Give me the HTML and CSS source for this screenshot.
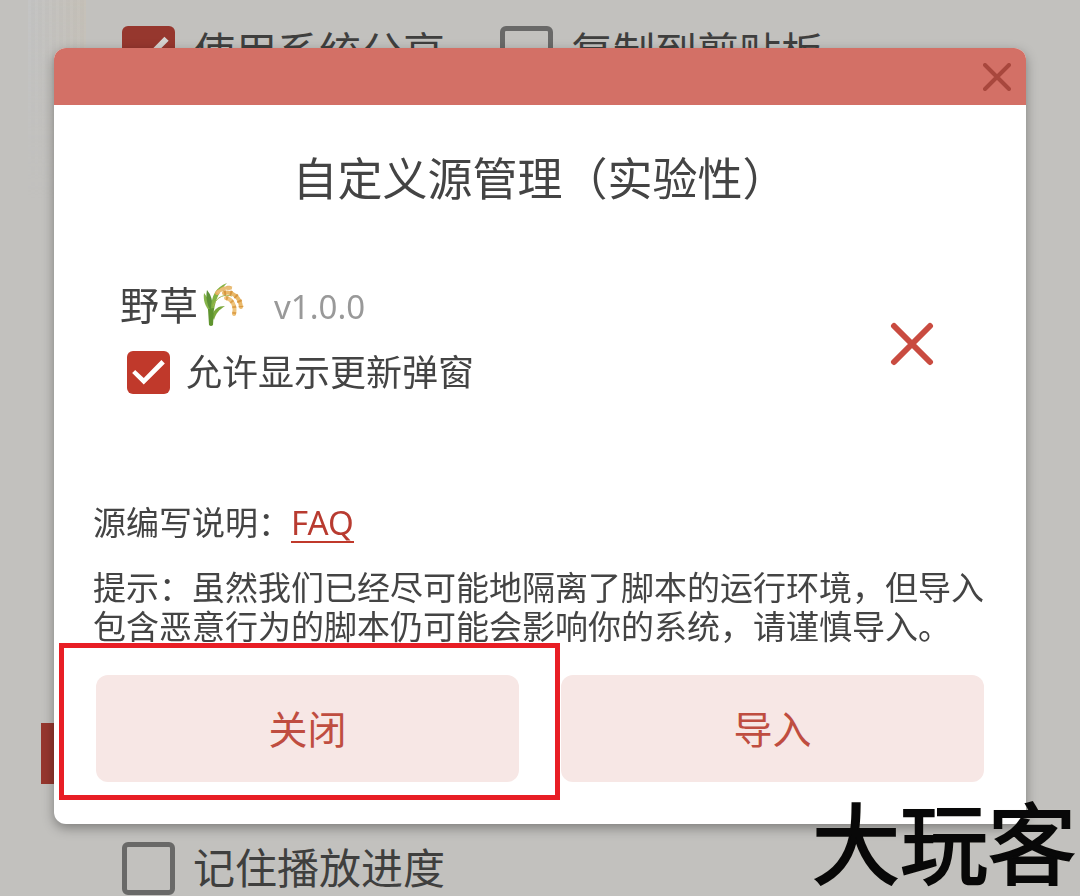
FILE: index.html
```
<!DOCTYPE html>
<html lang="zh-CN">
<head>
  <meta charset="UTF-8" />
  <meta name="viewport" content="width=device-width, initial-scale=1.0"/>
  <title>自定义源管理</title>
  <link rel="stylesheet" href="styles.css">
</head>
<body>
  <main class="settings">
    <div class="option-row">
      <label class="option"><input type="checkbox" class="box" checked>使用系统分享</label>
      <label class="option"><input type="checkbox" class="box">复制到剪贴板</label>
    </div>
    <div class="section-mark"></div>
    <div class="option-row">
      <label class="option"><input type="checkbox" class="box">记住播放进度</label>
    </div>
  </main>

  <div class="overlay">
    <div class="modal" role="dialog" aria-labelledby="modalTitle">
      <div class="modal-header">
        <button class="icon-btn" aria-label="关闭窗口">
          <svg width="28" height="28" viewBox="0 0 28 28"><path d="M2 2L26 26M26 2L2 26" stroke="#a8473d" stroke-width="4" stroke-linecap="round"/></svg>
        </button>
      </div>

      <div class="modal-body">
        <h1 id="modalTitle">自定义源管理（实验性）</h1>

        <div class="source">
          <div class="source-info">
            <div class="source-name">
              <span>野草</span>
              <svg class="rice" width="42" height="46" viewBox="0 0 42 46" fill="none">
                <path d="M7 30C2 24 0 18 1 11C5 16 8 22 9 30Z" fill="#86b44a"/>
                <path d="M6 26C3 18 3 13 4 8C8 13 10 18 9 28Z" fill="#5d9136"/>
                <path d="M8 28C8 14 13 5 24 1C17 8 13 16 11 28Z" fill="#83b343"/>
                <path d="M9 34C11 27 15 24 22 24C16 28 13 31 11 38Z" fill="#7aa83c"/>
                <path d="M5 27L11 26L10 43Q8 45 6 43Z" fill="#5f942f"/>
                <path d="M10 24C14 14 22 12 29 14" stroke="#a4b552" stroke-width="1"/>
                <path d="M14 11C18 7 23 5 29 6" stroke="#e2ad5c" stroke-width="4" stroke-linecap="round" stroke-dasharray="2 4"/>
                <path d="M14 11C18 7 23 5 29 6" stroke="#e9bd77" stroke-width="3"/>
                <path d="M21 11C29 9 37 15 38 25" stroke="#e9b869" stroke-width="4" stroke-linecap="round"/>
                <path d="M21 11C29 9 37 15 38 25" stroke="#d7963f" stroke-width="5" stroke-dasharray="2 4"/>
                <path d="M23 16C29 17 33 24 31 32" stroke="#efc47d" stroke-width="4" stroke-linecap="round"/>
                <path d="M23 16C29 17 33 24 31 32" stroke="#dda04a" stroke-width="4" stroke-dasharray="2 4"/>
              </svg>
              <span class="version">v1.0.0</span>
            </div>
            <label class="allow"><input type="checkbox" class="box small" checked>允许显示更新弹窗</label>
          </div>
          <button class="icon-btn" aria-label="移除">
            <svg width="44" height="44" viewBox="0 0 44 44"><path d="M4 4L40 40M40 4L4 40" stroke="#c94b40" stroke-width="6" stroke-linecap="round"/></svg>
          </button>
        </div>

        <p class="faq">源编写说明：<a href="#faq">FAQ</a></p>
        <p class="tip">提示：虽然我们已经尽可能地隔离了脚本的运行环境，但导入包含恶意行为的脚本仍可能会影响你的系统，请谨慎导入。</p>

        <div class="actions">
          <button class="btn marked">关闭</button>
          <button class="btn">导入</button>
        </div>
      </div>
    </div>
  </div>

  <div class="watermark">大玩客</div>
</body>
</html>
```
FILE: styles.css
```
* {
  box-sizing: border-box;
}
body {
  margin: 0;
  height: 100vh;
  overflow: hidden;
  background: #c2c1be;
  color: #444;
  font-family: "Noto Sans", "Noto Sans CJK SC", sans-serif;
}
/* faint streaks in the corner of the wallpaper */
body::before {
  content: "";
  position: absolute;
  top: 0;
  left: 28px;
  width: 58px;
  height: 200px;
  background:
    linear-gradient(90deg, rgba(190,195,205,0.2), rgba(200,180,150,0.2)),
    repeating-linear-gradient(90deg, rgba(255,255,255,0.06) 0 3px, transparent 3px 7px);
  -webkit-mask-image: linear-gradient(#000, transparent);
  mask-image: linear-gradient(#000, transparent);
}
.settings {
  height: 100%;
  padding: 18px 41px 0;
  display: flex;
  flex-direction: column;
}
.option-row {
  display: flex;
  gap: 55px;
  padding-left: 81px;
}
.option {
  display: flex;
  align-items: center;
  gap: 18px;
  font-size: 42px;
  line-height: 68px;
  color: #3f3f3e;
  white-space: nowrap;
}
.section-mark {
  width: 18px;
  height: 61px;
  margin: 637px 0 50px;
  flex-shrink: 0;
  background: #96372e;
}
.box {
  appearance: none;
  flex-shrink: 0;
  width: 53px;
  height: 53px;
  margin: 0;
  border: 5px solid #696968;
  border-radius: 6px;
}
.box:checked {
  border: none;
  background: #96372e;
}
.box:checked::before {
  content: "";
  display: block;
  width: 100%;
  height: 100%;
  background: #d4d2cf;
  clip-path: polygon(12% 51%, 19% 44%, 39% 63%, 80% 21%, 88% 29%, 39% 78%);
}
.overlay {
  position: fixed;
  inset: 0;
  padding: 48px 54px;
}
.modal {
  background: #fff;
  border-radius: 12px;
  box-shadow: 0 4px 12px rgba(0,0,0,0.35);
}
.modal-header {
  display: flex;
  align-items: center;
  justify-content: flex-end;
  height: 57px;
  padding-right: 15px;
  border-radius: 12px 12px 0 0;
  background: #d37066;
}
.icon-btn {
  display: flex;
  padding: 0;
  border: none;
  background: none;
  cursor: pointer;
}
.modal-body {
  padding: 47px 39px 42px;
}
h1 {
  margin: 0;
  font-size: 45px;
  font-weight: 400;
  line-height: 54px;
  text-align: center;
}
.source {
  display: flex;
  align-items: center;
  justify-content: space-between;
  margin-top: 74px;
  padding: 0 53px 0 27px;
}
.source-info {
  padding-bottom: 14px;
}
.source-name {
  display: flex;
  align-items: center;
  font-size: 39px;
  line-height: 50px;
}
.rice {
  margin: 0 29px 0 5px;
}
.version {
  padding-top: 3px;
  font-size: 33px;
  line-height: 47px;
  color: #999;
}
.allow {
  display: flex;
  align-items: center;
  gap: 16px;
  margin: 21px 0 0 7px;
  font-size: 36px;
  line-height: 43px;
}
.box.small {
  width: 43px;
  height: 43px;
}
.box.small:checked {
  background: #c0392b;
}
.box.small:checked::before {
  background: #fff;
}
.faq {
  margin: 95px 0 25px;
  font-size: 33px;
  line-height: 39px;
}
.faq a {
  display: inline-block;
  line-height: 37px;
  color: #b83b30;
  text-decoration: none;
  border-bottom: 2px solid #c0392b;
}
.tip {
  margin: 0;
  font-size: 33px;
  line-height: 39px;
}
.actions {
  display: flex;
  gap: 42px;
  margin: 29px 3px 0;
}
.btn {
  position: relative;
  flex: 1;
  height: 107px;
  padding: 0 0 4px;
  border: none;
  border-radius: 12px;
  background: #f7e7e5;
  color: #bf4d40;
  font-family: inherit;
  font-size: 39px;
  cursor: pointer;
}
/* red frame around the button to press */
.marked::after {
  content: "";
  position: absolute;
  inset: -32px -41px -18px -37px;
  border: 5px solid #e81e25;
}
.watermark {
  position: fixed;
  right: 4px;
  bottom: 0;
  color: #080808;
  font-family: "Liberation Sans", "Noto Sans CJK SC", sans-serif;
  font-size: 88px;
  line-height: 98px;
  -webkit-text-stroke: 2px #080808;
  text-shadow: 0 0 2px #d8d4b8;
}
```
